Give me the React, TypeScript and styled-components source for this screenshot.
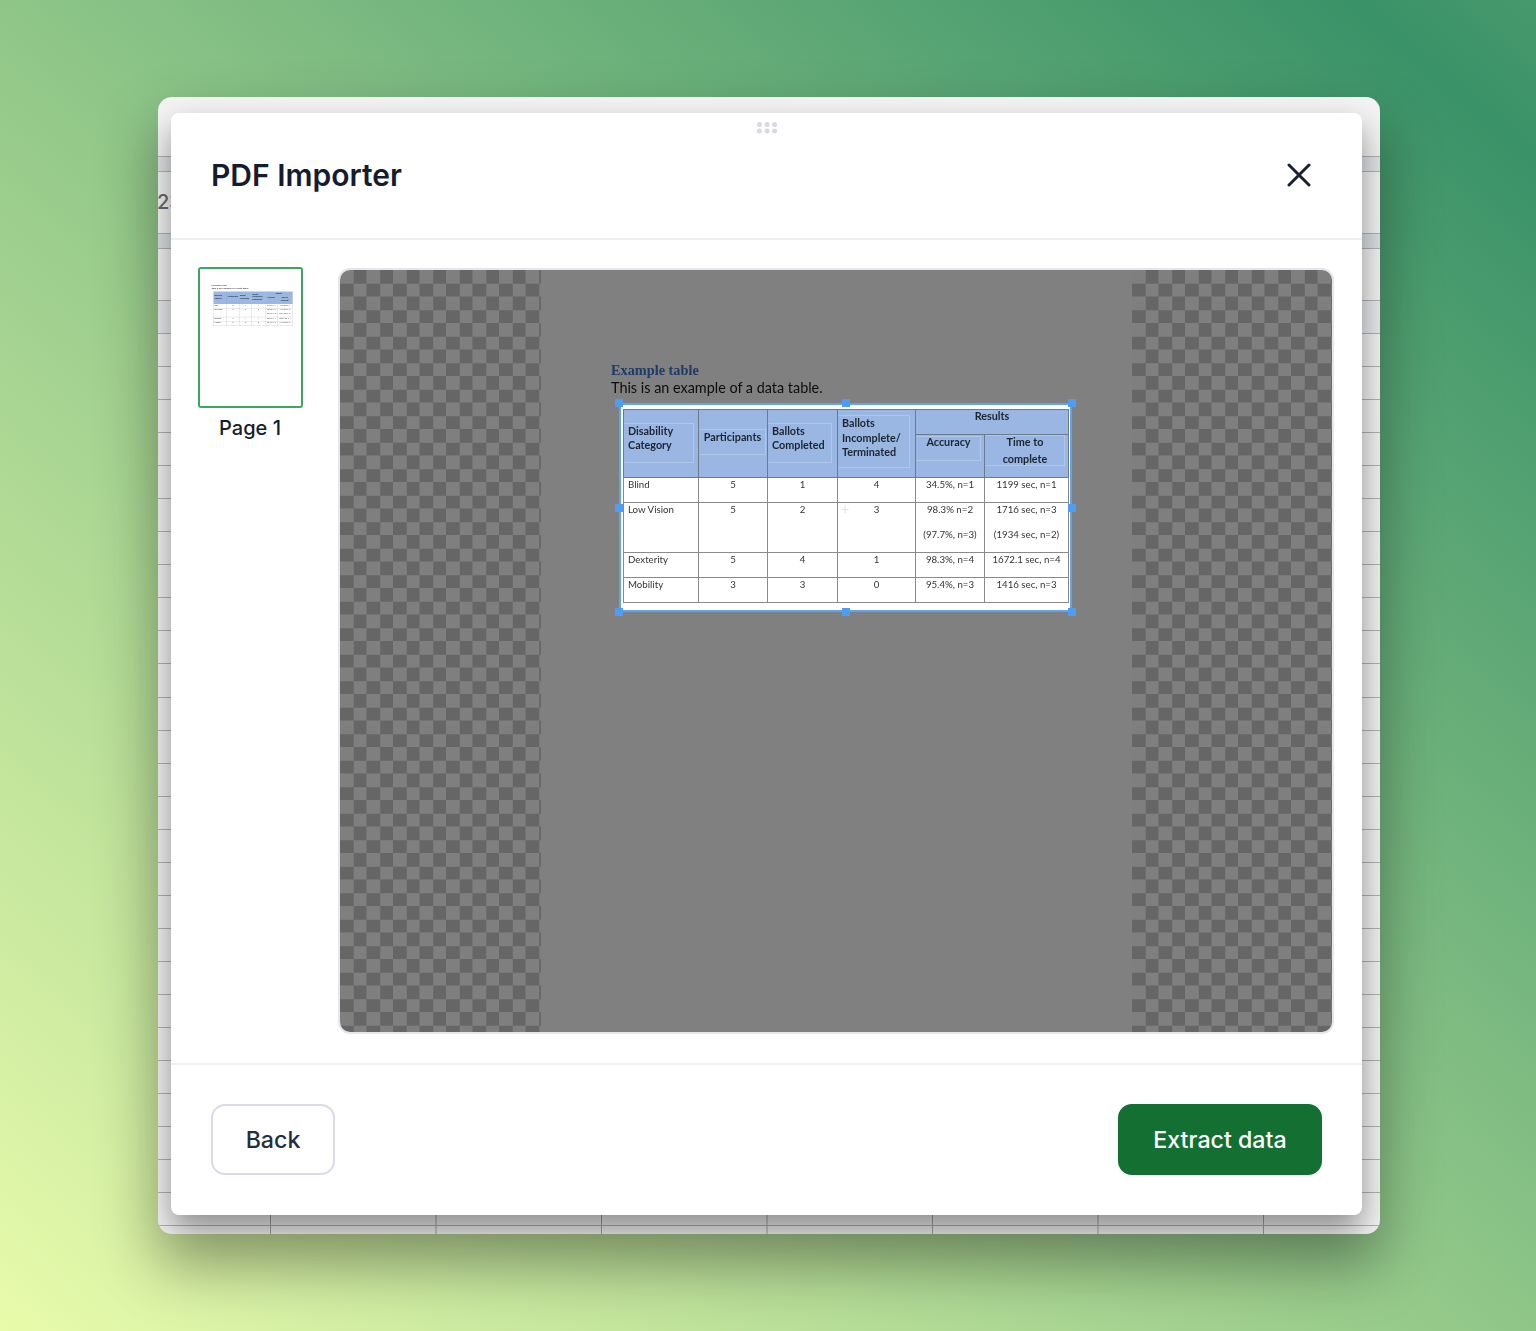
import React from "react";
import styled, { createGlobalStyle } from "styled-components";

const Global = createGlobalStyle`
  html, body { margin: 0; padding: 0; }
  body { font-family: Inter, "Liberation Sans", sans-serif; }
`;

const Page = styled.div`
  box-sizing: border-box;
  width: 1536px;
  height: 1331px;
  padding: 97px 156px 0 158px;
  overflow: hidden;
  background: linear-gradient(to top right, #e8fbab 0%, #8fc688 50%, #3a9268 94%, #46996c 100%);
`;

const AppWindow = styled.div`
  position: relative;
  height: 1137px;
  border-radius: 14px;
  overflow: hidden;
  background: #f3f3f3;
  box-shadow: 0 30px 60px rgba(0, 0, 0, 0.38);
`;

const SheetRow = styled.div<{ $h: number; $tint?: string; $cols?: boolean }>`
  box-sizing: border-box;
  height: ${(p) => p.$h}px;
  border-bottom: 1px solid #b2b2b6;
  background-color: ${(p) => p.$tint || "transparent"};
  background-image: ${(p) =>
    p.$cols ? "linear-gradient(to right, #a2a2a2 1px, transparent 1px)" : "none"};
  background-size: 165.5px 100%;
  background-position: 112px 0;
  background-repeat: repeat-x;
  text-indent: -1px;
  font-size: 20px;
  line-height: 60px;
  font-weight: 500;
  color: #666a74;
`;

const SheetEnd = styled(SheetRow)`
  border-bottom: none;
`;

const Modal = styled.div`
  position: absolute;
  left: 13px;
  right: 18px;
  top: 16px;
  bottom: 19px;
  display: flex;
  flex-direction: column;
  background: #fff;
  border-radius: 8px;
  box-shadow: 0 16px 32px rgba(0, 0, 0, 0.42);
`;

const DragHandle = styled.svg`
  position: absolute;
  left: 586px;
  top: 9px;
`;

const Header = styled.header`
  box-sizing: border-box;
  height: 127px;
  flex: none;
  display: flex;
  align-items: center;
  justify-content: space-between;
  padding: 0 51px 2px 40px;
  border-bottom: 2px solid #eceef2;
`;

const Title = styled.h1`
  margin: 0;
  font-size: 30px;
  line-height: 36px;
  font-weight: 600;
  color: #151c2e;
`;

const CloseButton = styled.button`
  display: flex;
  padding: 0;
  border: none;
  background: none;
  color: #1a2133;
`;

const Body = styled.div`
  flex: 1;
  min-height: 0;
  display: flex;
  gap: 35px;
  padding: 27px 28px 29px 27px;
`;

const ThumbColumn = styled.div`
  width: 105px;
  flex: none;
  display: flex;
  flex-direction: column;
  align-items: center;
  gap: 6px;
`;

const Thumb = styled.div`
  box-sizing: border-box;
  width: 105px;
  height: 141px;
  border: 2px solid #39a85c;
  border-radius: 3px;
  overflow: hidden;
  background: #fff;
`;

const ThumbScale = styled.div`
  width: 591px;
  margin: -2px 0 0 -1px;
  transform: scale(0.177);
  transform-origin: top left;
`;

const ThumbLabel = styled.div`
  padding-right: 1px;
  font-size: 20px;
  line-height: 28px;
  font-weight: 500;
  color: #151c2e;
`;

const Viewer = styled.div`
  flex: 1;
  min-width: 0;
  box-sizing: border-box;
  margin-top: 1px;
  border: 2px solid #e6e7ed;
  border-radius: 12px;
  overflow: hidden;
  display: grid;
  grid-template-columns: 201px 591px 1fr;
`;

const Checker = styled.div`
  background: conic-gradient(#666 25%, #7f7f7f 0 50%, #666 0 75%, #7f7f7f 0) 0 0 / 26.5px 26.5px;
`;

const PdfPage = styled.div<{ $thumb?: boolean }>`
  box-sizing: border-box;
  width: 591px;
  height: 762px;
  padding: 92px 0 0 70px;
  background: ${(p) => (p.$thumb ? "#fff" : "#808080")};
  filter: blur(${(p) => (p.$thumb ? 2.5 : 0.45)}px);
`;

const DocTitle = styled.div`
  font-family: "Liberation Serif", serif;
  font-size: 14.3px;
  font-weight: 700;
  line-height: 16px;
  color: #1e3a66;
`;

const DocText = styled.div`
  margin-top: 1px;
  font-family: Lato, sans-serif;
  font-size: 14.4px;
  line-height: 18px;
  color: #0d0d0d;
`;

const Selection = styled.div<{ $on: boolean }>`
  position: relative;
  box-sizing: border-box;
  width: 453px;
  height: 209px;
  margin: 6px 0 0 8px;
  padding: 4px 0 0 2px;
  border: 2px solid ${(p) => (p.$on ? "#5fa4f4" : "transparent")};
  background: ${(p) => (p.$on ? "#fff" : "transparent")};
`;

const HandleLayer = styled.div`
  position: absolute;
  inset: -2px;
`;

const Handle = styled.span<{ $x: string; $y: string }>`
  position: absolute;
  left: ${(p) => p.$x};
  top: ${(p) => p.$y};
  width: 8px;
  height: 8px;
  margin: -4px 0 0 -4px;
  background: #4f9df2;
`;

const Cross = styled.span`
  position: absolute;
  left: 220px;
  top: 96px;
  font-family: "Liberation Sans", sans-serif;
  font-size: 14px;
  line-height: 16px;
  color: #e2e2e2;
`;

const Table = styled.table`
  width: 445px;
  table-layout: fixed;
  border-collapse: collapse;
  font-family: Lato, sans-serif;
  font-size: 9.7px;
`;

const Th = styled.th<{ $pt: number; $center?: boolean; $lh?: number }>`
  padding: ${(p) => p.$pt}px 0 0;
  vertical-align: top;
  background: #99b7e2;
  border: 1px solid #6d7a8e;
  font-size: 10.8px;
  font-weight: 700;
  line-height: ${(p) => p.$lh ?? 14}px;
  color: #1d2530;
  text-align: ${(p) => (p.$center ? "center" : "left")};
`;

const FieldBox = styled.span<{ $h: number; $w: number; $pad?: number; $lh?: number }>`
  display: block;
  box-sizing: border-box;
  width: ${(p) => p.$w}px;
  height: ${(p) => p.$h}px;
  padding: 0 0 0 ${(p) => p.$pad ?? 3}px;
  line-height: ${(p) => p.$lh ?? 14}px;
  white-space: nowrap;
  border: 1px solid rgba(190, 210, 240, 0.6);
  border-left-color: transparent;
`;

const FieldText = styled.span<{ $shift: number }>`
  display: block;
  margin-top: ${(p) => p.$shift}px;
`;

const Td = styled.td<{ $center?: boolean }>`
  padding: 0;
  vertical-align: top;
  border: 1px solid #8a8a8a;
  color: #333;
  text-align: ${(p) => (p.$center ? "center" : "left")};
`;

const CellLine = styled.div<{ $left?: boolean }>`
  height: 24px;
  line-height: 13px;
  padding-left: ${(p) => (p.$left ? 4 : 0)}px;
  white-space: nowrap;
  & + & {
    margin-top: 1px;
  }
`;

const Pane = styled.div`
  height: 762px;
`;

const Footer = styled.footer`
  box-sizing: border-box;
  flex: none;
  height: 152px;
  display: flex;
  align-items: center;
  justify-content: space-between;
  padding: 0 40px 1px;
  border-top: 2px solid #eff0f5;
`;

const FooterButton = styled.button<{ $primary?: boolean }>`
  box-sizing: border-box;
  height: 71px;
  width: ${(p) => (p.$primary ? 204 : 124)}px;
  border-radius: 14px;
  border: 2px solid ${(p) => (p.$primary ? "#136f32" : "#d9dce6")};
  background: ${(p) => (p.$primary ? "#136f32" : "#fff")};
  color: ${(p) => (p.$primary ? "#fff" : "#252e3e")};
  font-family: Inter, sans-serif;
  font-size: 23.2px;
  font-weight: 500;
`;

const rows: { name: string; lines: string[][] }[] = [
  { name: "Blind", lines: [["5", "1", "4", "34.5%, n=1", "1199 sec, n=1"]] },
  {
    name: "Low Vision",
    lines: [
      ["5", "2", "3", "98.3% n=2", "1716 sec, n=3"],
      ["", "", "", "(97.7%, n=3)", "(1934 sec, n=2)"],
    ],
  },
  { name: "Dexterity", lines: [["5", "4", "1", "98.3%, n=4", "1672.1 sec, n=4"]] },
  { name: "Mobility", lines: [["3", "3", "0", "95.4%, n=3", "1416 sec, n=3"]] },
];

const handles: [string, string][] = [
  ["0", "0"], ["50%", "0"], ["100%", "0"],
  ["0", "50%"], ["100%", "50%"],
  ["0", "100%"], ["50%", "100%"], ["100%", "100%"],
];

function PdfContent({ thumb }: { thumb?: boolean }) {
  return (
    <PdfPage $thumb={thumb}>
      <DocTitle>Example table</DocTitle>
      <DocText>This is an example of a data table.</DocText>
      <Selection $on={!thumb}>
        <Table>
          <colgroup>
            <col width={75} />
            <col width={69} />
            <col width={70} />
            <col width={78} />
            <col width={69} />
            <col width={84} />
          </colgroup>
          <thead>
            <tr style={{ height: 25 }}>
              <Th rowSpan={2} $pt={13}>
                <FieldBox $w={70} $h={40}>Disability<br />Category</FieldBox>
              </Th>
              <Th rowSpan={2} $pt={19} $center>
                <FieldBox $w={67} $h={26} $pad={0}>Participants</FieldBox>
              </Th>
              <Th rowSpan={2} $pt={13}>
                <FieldBox $w={64} $h={40}>Ballots<br />Completed</FieldBox>
              </Th>
              <Th rowSpan={2} $pt={5}>
                <FieldBox $w={72} $h={53} $lh={14.5}>Ballots<br />Incomplete/<br />Terminated</FieldBox>
              </Th>
              <Th colSpan={2} $pt={0} $lh={12} $center>Results</Th>
            </tr>
            <tr style={{ height: 43 }}>
              <Th $pt={1} $center>
                <FieldBox $w={65} $h={25} $pad={0}>
                  <FieldText $shift={-2}>Accuracy</FieldText>
                </FieldBox>
              </Th>
              <Th $pt={0} $center>
                <FieldBox $w={80} $h={31} $pad={0} $lh={16.5}>
                  <FieldText $shift={-2}>Time to<br />complete</FieldText>
                </FieldBox>
              </Th>
            </tr>
          </thead>
          <tbody>
            {rows.map((row) => (
              <tr key={row.name}>
                <Td>
                  <CellLine $left>{row.name}</CellLine>
                  {row.lines.length > 1 && <CellLine />}
                </Td>
                {[0, 1, 2, 3, 4].map((col) => (
                  <Td key={col} $center>
                    {row.lines.map((line, i) => (
                      <CellLine key={i}>{line[col]}</CellLine>
                    ))}
                  </Td>
                ))}
              </tr>
            ))}
          </tbody>
        </Table>
        {!thumb && <Cross>+</Cross>}
        {!thumb && (
          <HandleLayer>
            {handles.map(([x, y]) => (
              <Handle key={x + y} $x={x} $y={y} />
            ))}
          </HandleLayer>
        )}
      </Selection>
    </PdfPage>
  );
}

export default function App() {
  return (
    <Page>
      <Global />
      <AppWindow>
        <SheetRow $h={60} />
        <SheetRow $h={15} $tint="#e2e4e8" />
        <SheetRow $h={62}>23</SheetRow>
        <SheetRow $h={15} $tint="#dcdfe4" />
        <SheetRow $h={52} />
        <SheetRow $h={33} $tint="#e8eaee" />
        {Array.from({ length: 27 }, (_, i) => (
          <SheetRow key={i} $h={33.06} $cols={i > 24} />
        ))}
        <SheetEnd $h={40} $cols />
        <Modal>
          <DragHandle width="20" height="12" viewBox="0 0 20 12">
            {[2.5, 10, 17.5].map((x) =>
              [2.5, 9].map((y) => <circle key={`${x}-${y}`} cx={x} cy={y} r="2.5" fill="#d7d8e0" />)
            )}
          </DragHandle>
          <Header>
            <Title>PDF Importer</Title>
            <CloseButton aria-label="Close">
              <svg width="24" height="24" viewBox="0 0 24 24" fill="none">
                <path d="M2 2 22 22M22 2 2 22" stroke="currentColor" strokeWidth="3" strokeLinecap="round" />
              </svg>
            </CloseButton>
          </Header>
          <Body>
            <ThumbColumn>
              <Thumb>
                <ThumbScale>
                  <PdfContent thumb />
                </ThumbScale>
              </Thumb>
              <ThumbLabel>Page 1</ThumbLabel>
            </ThumbColumn>
            <Viewer>
              <Checker />
              <Pane>
                <PdfContent />
              </Pane>
              <Checker />
            </Viewer>
          </Body>
          <Footer>
            <FooterButton>Back</FooterButton>
            <FooterButton $primary>Extract data</FooterButton>
          </Footer>
        </Modal>
      </AppWindow>
    </Page>
  );
}
